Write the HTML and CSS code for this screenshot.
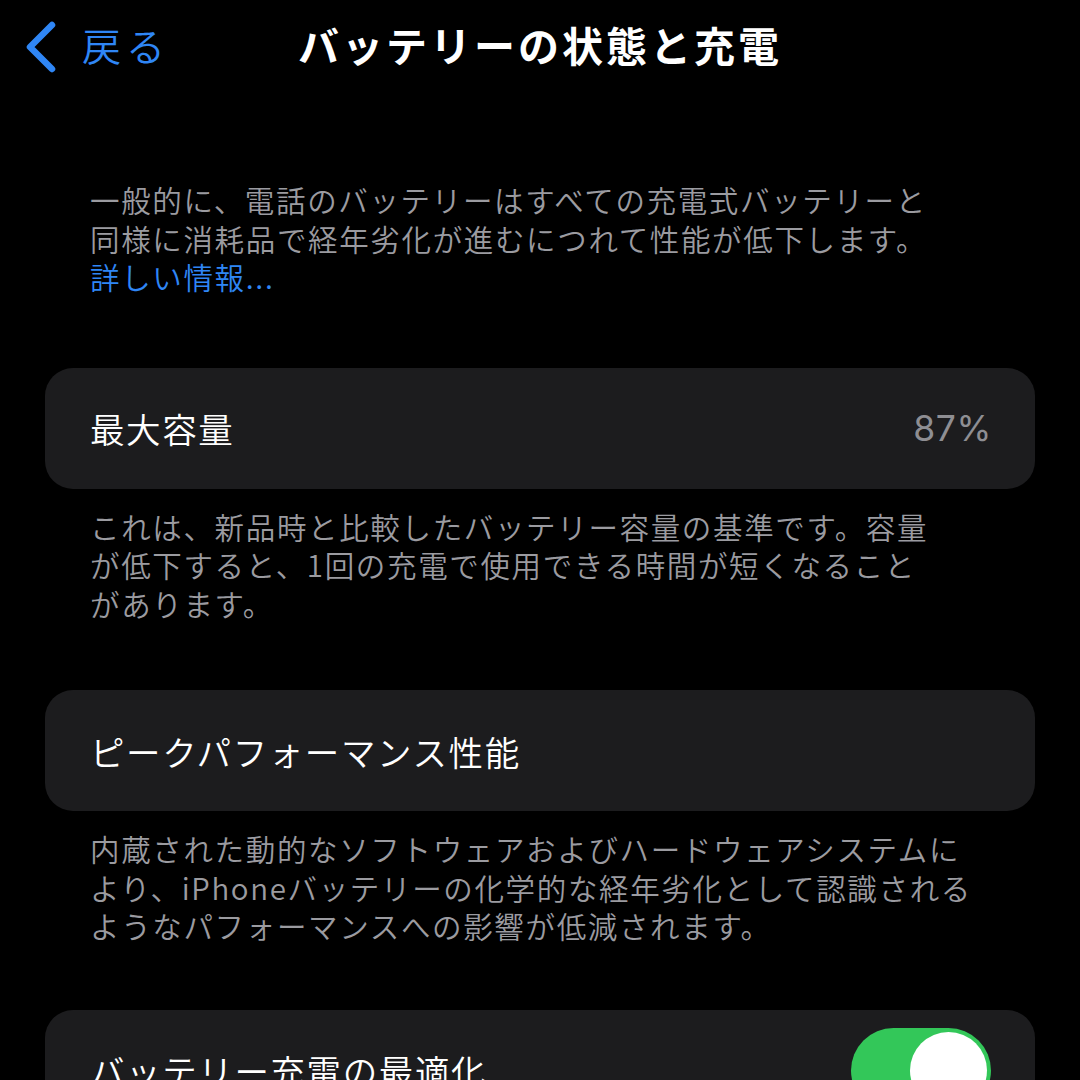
FILE: index.html
```html
<!DOCTYPE html>
<html lang="ja">
<head>
<meta charset="utf-8">
<title>バッテリーの状態と充電</title>
<link rel="stylesheet" href="styles.css">
</head>
<body>
<div class="screen">
  <header class="nav">
    <div class="back">
      <svg class="chev" width="34" height="52" viewBox="0 0 34 52"><path d="M28 4 L6 26 L28 48" fill="none" stroke="#2f86f5" stroke-width="6.5" stroke-linecap="round" stroke-linejoin="round"/></svg>
      <span class="back-label">戻る</span>
    </div>
    <h1 class="title">バッテリーの状態と充電</h1>
  </header>

  <p class="note intro">一般的に、電話のバッテリーはすべての充電式バッテリーと<br>同様に消耗品で経年劣化が進むにつれて性能が低下します。<br><span class="link">詳しい情報...</span></p>

  <section class="card">
    <span class="label">最大容量</span>
    <span class="value">87%</span>
  </section>
  <p class="note">これは、新品時と比較したバッテリー容量の基準です。容量<br>が低下すると、1回の充電で使用できる時間が短くなること<br>があります。</p>

  <section class="card gap">
    <span class="label">ピークパフォーマンス性能</span>
  </section>
  <p class="note">内蔵された動的なソフトウェアおよびハードウェアシステムに<br>より、iPhoneバッテリーの化学的な経年劣化として認識される<br>ようなパフォーマンスへの影響が低減されます。</p>

  <section class="card gap last">
    <span class="label">バッテリー充電の最適化</span>
    <span class="toggle"><span class="knob"></span></span>
  </section>
</div>
</body>
</html>
```

FILE: styles.css
```css
html, body {
  margin: 0;
  padding: 0;
  background: #000;
}
.screen {
  width: 1080px;
  height: 1080px;
  overflow: hidden;
  background: #000;
  font-family: "Noto Sans CJK JP", "Noto Sans", sans-serif;
  color: #fff;
}
.nav {
  position: relative;
  height: 92px;
  display: flex;
  align-items: center;
  justify-content: center;
}
.back {
  position: absolute;
  left: 24px;
  top: 21px;
  display: flex;
  align-items: center;
  gap: 24px;
}
.chev {
  display: block;
}
.back-label {
  color: #2f86f5;
  font-size: 39px;
  font-weight: 350;
  letter-spacing: 5px;
  line-height: 52px;
  transform: translateY(-3px);
}
.title {
  margin: 0;
  font-size: 41px;
  font-weight: 700;
  letter-spacing: 3px;
  line-height: 52px;
  transform: translateY(-2px);
}
.note {
  margin: 0;
  padding: 0 90px;
  font-size: 29.5px;
  font-weight: 350;
  line-height: 38.5px;
  letter-spacing: 1.65px;
  color: #9b9ba0;
  white-space: nowrap;
}
.intro {
  margin-top: 88px;
  margin-bottom: 72px;
}
.link {
  color: #2f86f5;
}
.card {
  margin: 0 45px 18px;
  height: 121px;
  border-radius: 28px;
  background: #1c1c1e;
  display: flex;
  align-items: center;
  justify-content: space-between;
  padding: 0 45px;
}
.card.gap {
  margin-top: 68px;
}
.card.last {
  margin-top: 65px;
}
.label {
  font-size: 34.5px;
  font-weight: 350;
  letter-spacing: 1.6px;
  color: #fff;
}
.value {
  font-family: "Inter", "Roboto", sans-serif;
  font-size: 35.5px;
  font-weight: 400;
  color: #8e8e93;
  letter-spacing: 0.6px;
  margin-right: -2px;
}
.toggle {
  width: 140px;
  height: 85px;
  border-radius: 43px;
  background: #33c759;
  display: flex;
  align-items: center;
  justify-content: flex-end;
  padding: 0 4px;
  box-sizing: border-box;
  margin-right: -1px;
}
.knob {
  width: 77px;
  height: 77px;
  border-radius: 50%;
  background: #fff;
}
```
